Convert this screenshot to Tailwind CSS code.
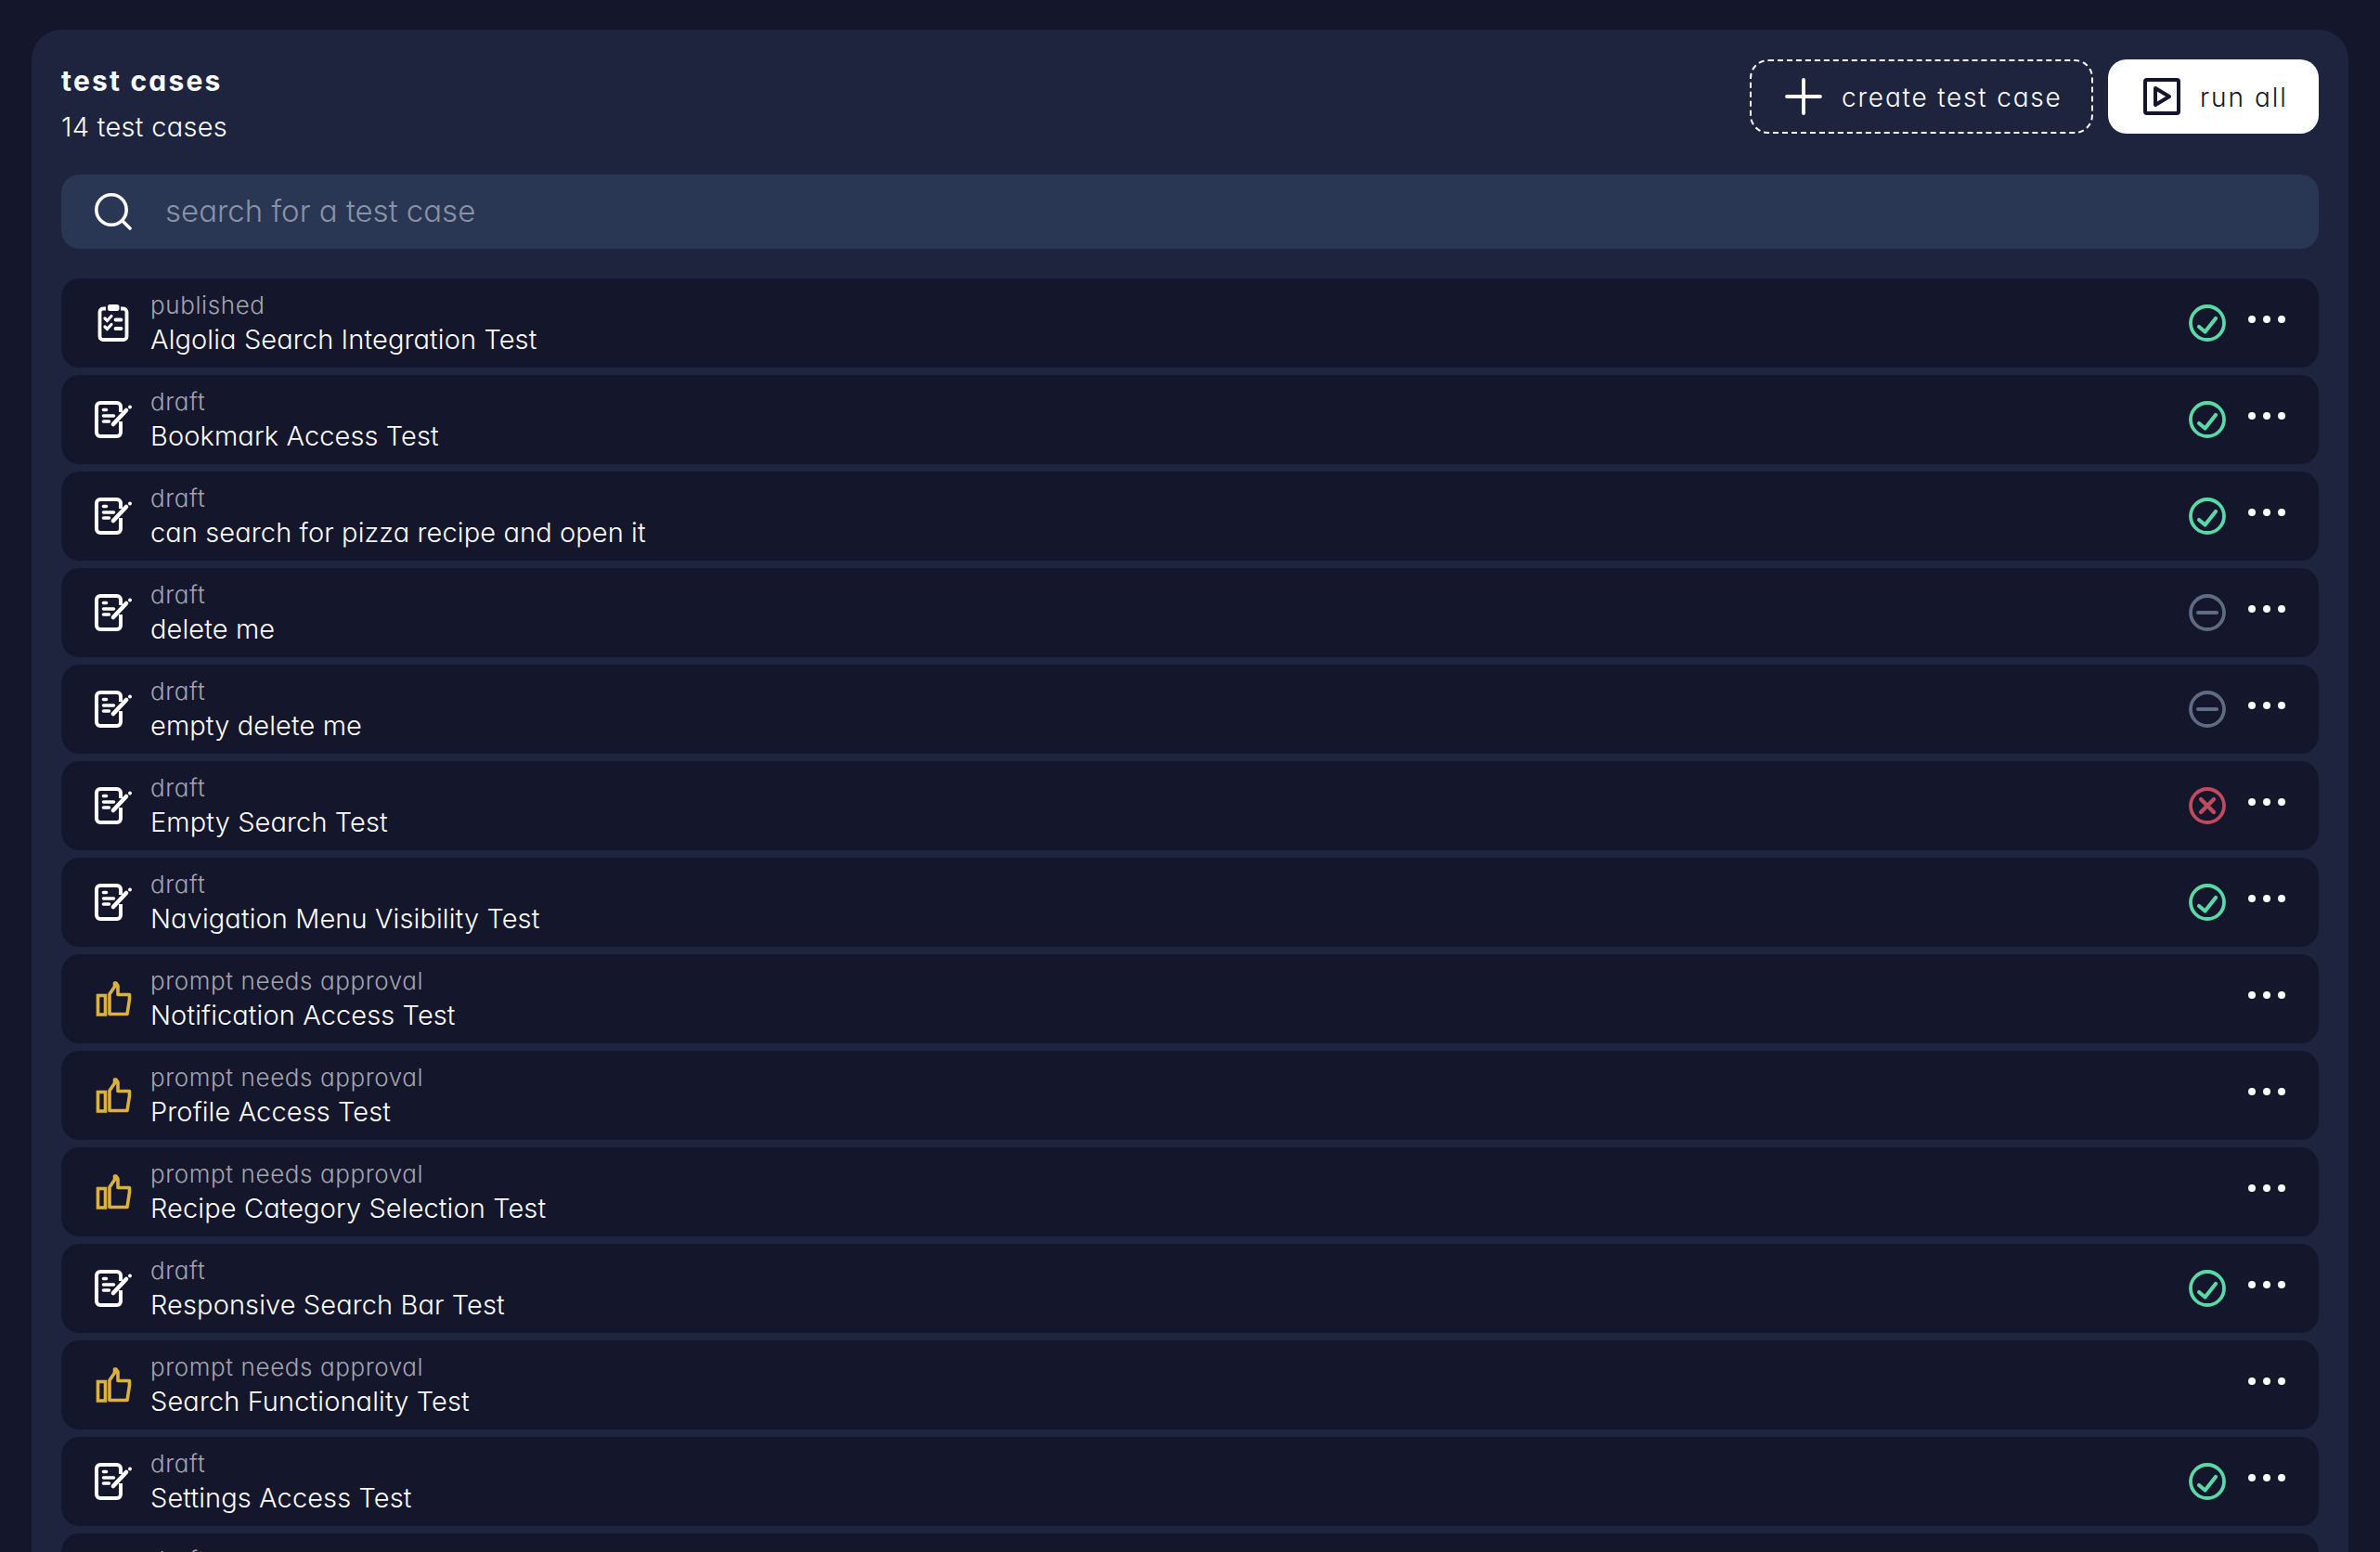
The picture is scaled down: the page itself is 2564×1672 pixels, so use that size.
<!DOCTYPE html>
<html>
<head>
<meta charset="utf-8">
<script src="https://cdn.jsdelivr.net/npm/@tailwindcss/browser@4"></script>
</head>
<body class="m-0">
<svg width="0" height="0" class="absolute">
<defs>
<symbol id="doc" viewBox="0 0 40 40"><path d="M28 12V6a4 4 0 0 0-4-4H6a4 4 0 0 0-4 4v28a4 4 0 0 0 4 4h18a4 4 0 0 0 4-4V22" fill="none" stroke="currentColor" stroke-width="4"/><path d="M9.500 9.500h3M9.500 16h11M9.500 22h6" stroke="currentColor" stroke-width="3.600" stroke-linecap="round"/><path d="M20 25L34 10" stroke="currentColor" stroke-width="4.600" stroke-linecap="round"/><circle cx="38" cy="6.500" r="2" fill="currentColor"/></symbol>
<symbol id="clip" viewBox="0 0 40 40"><path d="M12 4.500H9a3.500 3.500 0 0 0-3.500 3.500v26.500A3.500 3.500 0 0 0 9 38h22a3.500 3.500 0 0 0 3.500-3.500V8A3.500 3.500 0 0 0 31 4.500h-3" fill="none" stroke="currentColor" stroke-width="3.800"/><rect x="14" y="0" width="12.500" height="7" rx="2.500" fill="currentColor"/><path d="M11 15l2.500 2.500L18 12.500M11 24l2.500 2.500L18 21.500" fill="none" stroke="currentColor" stroke-width="3.200" stroke-linecap="round"/><path d="M22.500 16.500h6M22.500 26h6" stroke="currentColor" stroke-width="3.800" stroke-linecap="round"/></symbol>
<symbol id="thumb" viewBox="0 0 40 40"><rect x="3.500" y="16.500" width="8" height="20.500" fill="none" stroke="currentColor" stroke-width="3.600"/><path d="M16 36.500V15l5.500-8V3h1.500l2 3v9.500h12.500v5L35 36.500z" fill="none" stroke="currentColor" stroke-width="3.600" stroke-linejoin="round"/></symbol>
<symbol id="ok" viewBox="0 0 40 40"><circle cx="20" cy="20" r="18" fill="none" stroke="currentColor" stroke-width="3.800"/><path d="M11 24l6.500 5.500L29 15" fill="none" stroke="currentColor" stroke-width="4.200" stroke-linecap="round" stroke-linejoin="round"/></symbol>
<symbol id="no" viewBox="0 0 40 40"><circle cx="20" cy="20" r="18" fill="none" stroke="currentColor" stroke-width="3.800"/><path d="M10 20h20" fill="none" stroke="currentColor" stroke-width="4.200" stroke-linecap="round"/></symbol>
<symbol id="bad" viewBox="0 0 40 40"><circle cx="20" cy="20" r="18" fill="none" stroke="currentColor" stroke-width="3.800"/><path d="M13 13l14 14M27 13L13 27" fill="none" stroke="currentColor" stroke-width="4.400" stroke-linecap="round"/></symbol>
<symbol id="dots" viewBox="0 0 40 40"><circle cx="4" cy="20" r="4" fill="currentColor"/><circle cx="20" cy="20" r="4" fill="currentColor"/><circle cx="36" cy="20" r="4" fill="currentColor"/></symbol>
</defs>
</svg>
<div class="h-[1672px] overflow-hidden bg-[#14162b] px-[34px] pt-8 text-white font-['Inter',sans-serif] [font-feature-settings:'cv11']">
<main class="rounded-t-[32px] bg-[#1e243e] px-8 pt-8 pb-8">
<header class="flex justify-between items-start">
<div class="pt-[1px]">
<h1 class="text-[30px] leading-[44px] font-bold tracking-[2.200px]">test cases</h1>
<p class="text-[29px] leading-[44px] mt-[6px] font-light tracking-[0.3px]">14 test cases</p>
</div>
<div class="flex gap-4">
<button class="h-20 w-[370px] flex items-center pl-[36px] gap-[21px] rounded-[20px] border-2 border-dashed border-white text-[28px] tracking-[1.800px] font-light"><svg class="w-10 h-10" viewBox="0 0 40 40"><path d="M20 2v36M2 20h36" stroke="currentColor" stroke-width="3.800" stroke-linecap="round"/></svg><span class="mt-[2px]">create test case</span></button>
<button class="h-20 w-[227px] flex items-center pl-[38px] gap-[21px] rounded-[20px] bg-white text-[#14162b] text-[28px] tracking-[2px] font-light"><svg class="w-10 h-10" viewBox="0 0 40 40"><rect x="2" y="2" width="36" height="36" rx="2" fill="none" stroke="currentColor" stroke-width="4"/><path d="M13 11l15 9-15 9z" fill="none" stroke="currentColor" stroke-width="4" stroke-linejoin="round"/></svg><span class="mt-[2px]">run all</span></button>
</div>
</header>
<div class="mt-[29px] h-20 rounded-[20px] bg-[#293654] flex items-center pl-9 gap-[36px]">
<svg class="w-10 h-10" viewBox="0 0 40 40"><circle cx="18" cy="18" r="16.200" fill="none" stroke="white" stroke-width="3.600"/><path d="M30 30l8 8" stroke="white" stroke-width="3.600" stroke-linecap="round"/></svg>
<span class="text-[33px] text-[#8a93a6] font-light">search for a test case</span>
</div>
<ul class="mt-8 flex flex-col gap-2">
<li class="h-24 rounded-[20px] bg-[#14162b] flex items-center pl-9 pr-9"><svg class="w-10 h-10 text-white"><use href="#clip"/></svg><div class="ml-5 flex-1"><p class="text-[26px] leading-[36px] text-[#a3a4b0] font-light tracking-[0.6px]">published</p><p class="text-[29px] leading-[38px] font-light tracking-[0.1px]">Algolia Search Integration Test</p></div><svg class="w-10 h-10 text-[#5ad8a6]"><use href="#ok"/></svg><svg class="w-10 h-10 ml-6 -mt-2 text-white"><use href="#dots"/></svg></li>
<li class="h-24 rounded-[20px] bg-[#14162b] flex items-center pl-9 pr-9"><svg class="w-10 h-10 text-white"><use href="#doc"/></svg><div class="ml-5 flex-1"><p class="text-[26px] leading-[36px] text-[#a3a4b0] font-light tracking-[0.6px]">draft</p><p class="text-[29px] leading-[38px] font-light tracking-[0.1px]">Bookmark Access Test</p></div><svg class="w-10 h-10 text-[#5ad8a6]"><use href="#ok"/></svg><svg class="w-10 h-10 ml-6 -mt-2 text-white"><use href="#dots"/></svg></li>
<li class="h-24 rounded-[20px] bg-[#14162b] flex items-center pl-9 pr-9"><svg class="w-10 h-10 text-white"><use href="#doc"/></svg><div class="ml-5 flex-1"><p class="text-[26px] leading-[36px] text-[#a3a4b0] font-light tracking-[0.6px]">draft</p><p class="text-[29px] leading-[38px] font-light tracking-[0.1px]">can search for pizza recipe and open it</p></div><svg class="w-10 h-10 text-[#5ad8a6]"><use href="#ok"/></svg><svg class="w-10 h-10 ml-6 -mt-2 text-white"><use href="#dots"/></svg></li>
<li class="h-24 rounded-[20px] bg-[#14162b] flex items-center pl-9 pr-9"><svg class="w-10 h-10 text-white"><use href="#doc"/></svg><div class="ml-5 flex-1"><p class="text-[26px] leading-[36px] text-[#a3a4b0] font-light tracking-[0.6px]">draft</p><p class="text-[29px] leading-[38px] font-light tracking-[0.1px]">delete me</p></div><svg class="w-10 h-10 text-[#5f6b82]"><use href="#no"/></svg><svg class="w-10 h-10 ml-6 -mt-2 text-white"><use href="#dots"/></svg></li>
<li class="h-24 rounded-[20px] bg-[#14162b] flex items-center pl-9 pr-9"><svg class="w-10 h-10 text-white"><use href="#doc"/></svg><div class="ml-5 flex-1"><p class="text-[26px] leading-[36px] text-[#a3a4b0] font-light tracking-[0.6px]">draft</p><p class="text-[29px] leading-[38px] font-light tracking-[0.1px]">empty delete me</p></div><svg class="w-10 h-10 text-[#5f6b82]"><use href="#no"/></svg><svg class="w-10 h-10 ml-6 -mt-2 text-white"><use href="#dots"/></svg></li>
<li class="h-24 rounded-[20px] bg-[#14162b] flex items-center pl-9 pr-9"><svg class="w-10 h-10 text-white"><use href="#doc"/></svg><div class="ml-5 flex-1"><p class="text-[26px] leading-[36px] text-[#a3a4b0] font-light tracking-[0.6px]">draft</p><p class="text-[29px] leading-[38px] font-light tracking-[0.1px]">Empty Search Test</p></div><svg class="w-10 h-10 text-[#c04a5e]"><use href="#bad"/></svg><svg class="w-10 h-10 ml-6 -mt-2 text-white"><use href="#dots"/></svg></li>
<li class="h-24 rounded-[20px] bg-[#14162b] flex items-center pl-9 pr-9"><svg class="w-10 h-10 text-white"><use href="#doc"/></svg><div class="ml-5 flex-1"><p class="text-[26px] leading-[36px] text-[#a3a4b0] font-light tracking-[0.6px]">draft</p><p class="text-[29px] leading-[38px] font-light tracking-[0.1px]">Navigation Menu Visibility Test</p></div><svg class="w-10 h-10 text-[#5ad8a6]"><use href="#ok"/></svg><svg class="w-10 h-10 ml-6 -mt-2 text-white"><use href="#dots"/></svg></li>
<li class="h-24 rounded-[20px] bg-[#14162b] flex items-center pl-9 pr-9"><svg class="w-10 h-10 text-[#dcb23a]"><use href="#thumb"/></svg><div class="ml-5 flex-1"><p class="text-[26px] leading-[36px] text-[#a3a4b0] font-light tracking-[0.6px]">prompt needs approval</p><p class="text-[29px] leading-[38px] font-light tracking-[0.1px]">Notification Access Test</p></div><svg class="w-10 h-10 ml-6 -mt-2 text-white"><use href="#dots"/></svg></li>
<li class="h-24 rounded-[20px] bg-[#14162b] flex items-center pl-9 pr-9"><svg class="w-10 h-10 text-[#dcb23a]"><use href="#thumb"/></svg><div class="ml-5 flex-1"><p class="text-[26px] leading-[36px] text-[#a3a4b0] font-light tracking-[0.6px]">prompt needs approval</p><p class="text-[29px] leading-[38px] font-light tracking-[0.1px]">Profile Access Test</p></div><svg class="w-10 h-10 ml-6 -mt-2 text-white"><use href="#dots"/></svg></li>
<li class="h-24 rounded-[20px] bg-[#14162b] flex items-center pl-9 pr-9"><svg class="w-10 h-10 text-[#dcb23a]"><use href="#thumb"/></svg><div class="ml-5 flex-1"><p class="text-[26px] leading-[36px] text-[#a3a4b0] font-light tracking-[0.6px]">prompt needs approval</p><p class="text-[29px] leading-[38px] font-light tracking-[0.1px]">Recipe Category Selection Test</p></div><svg class="w-10 h-10 ml-6 -mt-2 text-white"><use href="#dots"/></svg></li>
<li class="h-24 rounded-[20px] bg-[#14162b] flex items-center pl-9 pr-9"><svg class="w-10 h-10 text-white"><use href="#doc"/></svg><div class="ml-5 flex-1"><p class="text-[26px] leading-[36px] text-[#a3a4b0] font-light tracking-[0.6px]">draft</p><p class="text-[29px] leading-[38px] font-light tracking-[0.1px]">Responsive Search Bar Test</p></div><svg class="w-10 h-10 text-[#5ad8a6]"><use href="#ok"/></svg><svg class="w-10 h-10 ml-6 -mt-2 text-white"><use href="#dots"/></svg></li>
<li class="h-24 rounded-[20px] bg-[#14162b] flex items-center pl-9 pr-9"><svg class="w-10 h-10 text-[#dcb23a]"><use href="#thumb"/></svg><div class="ml-5 flex-1"><p class="text-[26px] leading-[36px] text-[#a3a4b0] font-light tracking-[0.6px]">prompt needs approval</p><p class="text-[29px] leading-[38px] font-light tracking-[0.1px]">Search Functionality Test</p></div><svg class="w-10 h-10 ml-6 -mt-2 text-white"><use href="#dots"/></svg></li>
<li class="h-24 rounded-[20px] bg-[#14162b] flex items-center pl-9 pr-9"><svg class="w-10 h-10 text-white"><use href="#doc"/></svg><div class="ml-5 flex-1"><p class="text-[26px] leading-[36px] text-[#a3a4b0] font-light tracking-[0.6px]">draft</p><p class="text-[29px] leading-[38px] font-light tracking-[0.1px]">Settings Access Test</p></div><svg class="w-10 h-10 text-[#5ad8a6]"><use href="#ok"/></svg><svg class="w-10 h-10 ml-6 -mt-2 text-white"><use href="#dots"/></svg></li>
<li class="h-24 rounded-[20px] bg-[#14162b] flex items-center pl-9 pr-9"><svg class="w-10 h-10 text-white"><use href="#doc"/></svg><div class="ml-5 flex-1"><p class="text-[26px] leading-[36px] text-[#a3a4b0] font-light tracking-[0.6px]">draft</p><p class="text-[29px] leading-[38px] font-light tracking-[0.1px]">&nbsp;</p></div></li>
</ul>
</main>
</div>
</body>
</html>
